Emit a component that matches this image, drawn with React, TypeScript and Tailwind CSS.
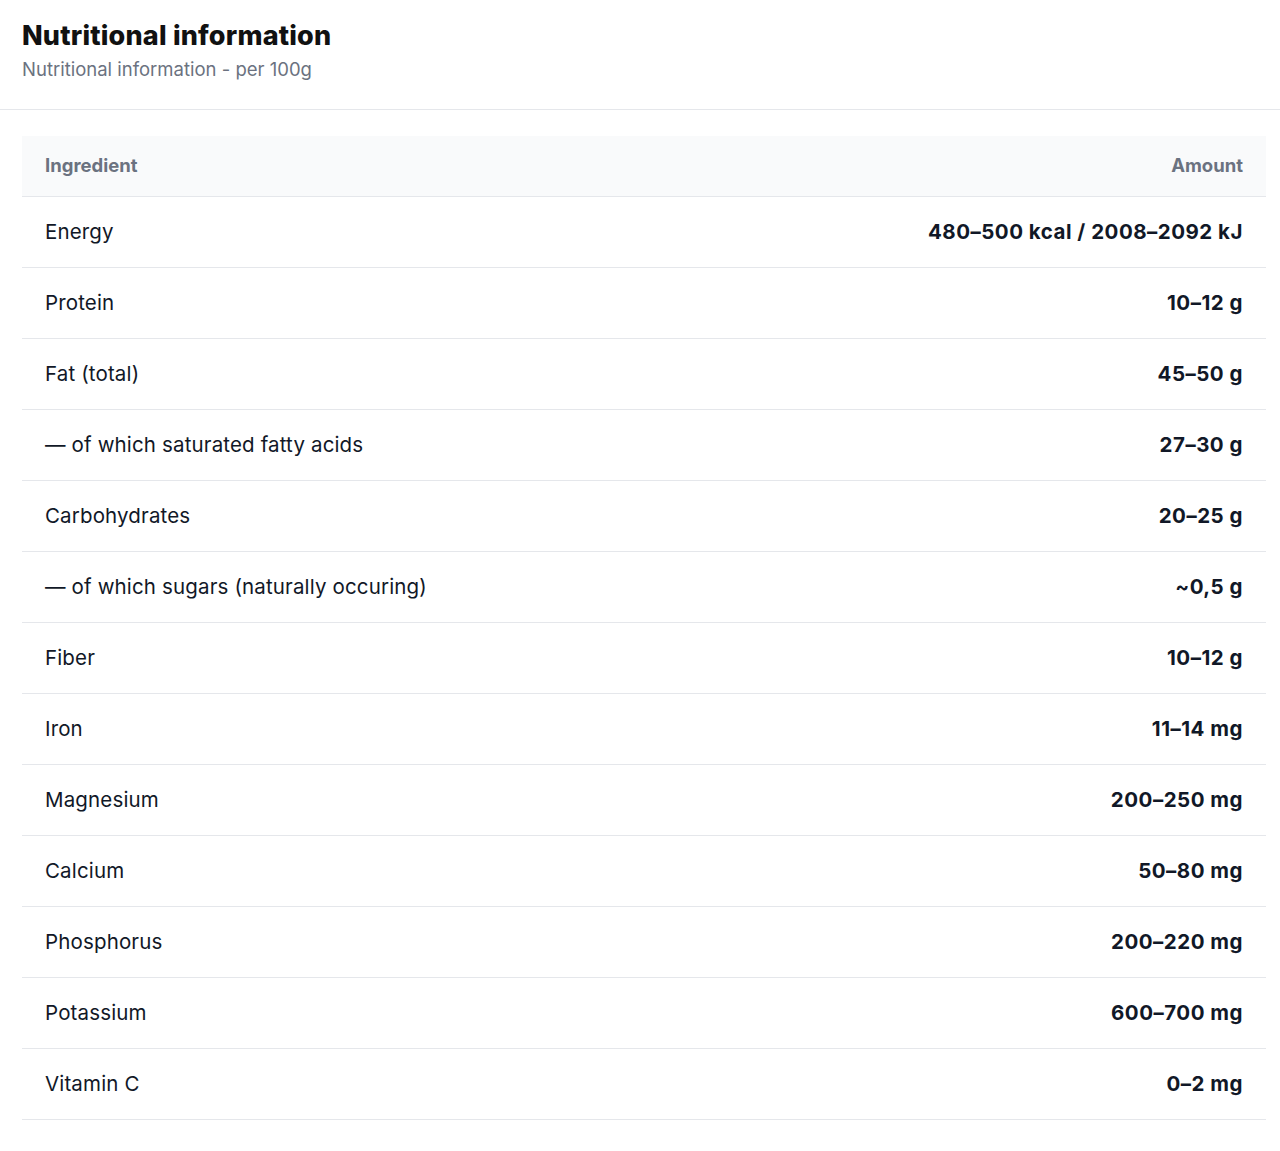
const rows: [string, string][] = [
  ["Energy", "480–500 kcal / 2008–2092 kJ"],
  ["Protein", "10–12 g"],
  ["Fat (total)", "45–50 g"],
  ["— of which saturated fatty acids", "27–30 g"],
  ["Carbohydrates", "20–25 g"],
  ["— of which sugars (naturally occuring)", "~0,5 g"],
  ["Fiber", "10–12 g"],
  ["Iron", "11–14 mg"],
  ["Magnesium", "200–250 mg"],
  ["Calcium", "50–80 mg"],
  ["Phosphorus", "200–220 mg"],
  ["Potassium", "600–700 mg"],
  ["Vitamin C", "0–2 mg"],
];

export default function App() {
  return (
    <div className="min-h-[1151px] bg-white" style={{ fontFamily: "Inter, 'Liberation Sans', sans-serif" }}>
      <div className="border-b border-[#e5e7eb] px-[22px] pt-[19px] pb-[27px]">
        <h1 className="text-[27px] leading-[33px] font-extrabold text-[#111111] tracking-[0.2px]">Nutritional information</h1>
        <p className="mt-[4px] text-[18.5px] leading-[26px] text-[#6b7280]">Nutritional information - per 100g</p>
      </div>
      <div className="pl-[22px] pr-[14px] pt-[26px]">
        <div className="flex h-[61px] items-center justify-between border-b border-[#e5e7eb] bg-[#f9fafb] px-[23px] text-[18.5px] font-bold text-[#6b7280]">
          <span>Ingredient</span>
          <span>Amount</span>
        </div>
        {rows.map(([a, b]) => (
          <div key={a} className="flex h-[71px] items-center justify-between border-b border-[#e5e7eb] px-[23px] text-[20.5px] text-[#111827]">
            <span className="tracking-[0.15px]">{a}</span>
            <span className="font-bold tracking-[0.5px]">{b}</span>
          </div>
        ))}
      </div>
    </div>
  );
}
